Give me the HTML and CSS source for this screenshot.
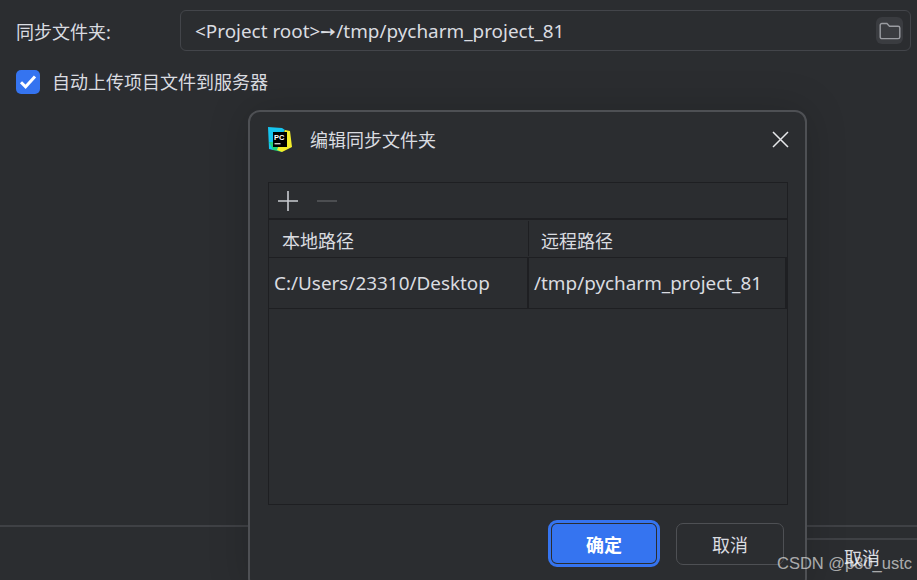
FILE: index.html
```html
<!DOCTYPE html>
<html lang="zh-CN">
<head>
  <meta charset="UTF-8">
  <title>编辑同步文件夹</title>
  <link rel="stylesheet" href="styles.css">
</head>
<body>

<div class="page">
  <!-- settings behind the dialog -->
  <div class="form-row">
    <label class="form-label">同步文件夹:</label>
    <div class="path-input">
      <span class="path-text">&lt;Project root&gt;➙/tmp/pycharm_project_81</span>
      <span class="folder-btn">
        <svg width="22" height="18" viewBox="0 0 22 18" fill="none" stroke="#9a9ca1" stroke-width="1.4">
          <path d="M1.2 3.2c0-1 .8-1.7 1.7-1.7h5l2.6 2.7h8.6c.9 0 1.7.8 1.7 1.7v9c0 1-.8 1.7-1.7 1.7H2.9c-.9 0-1.7-.7-1.7-1.7z"/>
        </svg>
      </span>
    </div>
  </div>

  <div class="check-row">
    <span class="checkbox">
      <svg width="18" height="16" viewBox="0 0 18 16" fill="none" stroke="#fff" stroke-width="3">
        <path d="M2 8.2l4.6 4.6L16 2.6"/>
      </svg>
    </span>
    <span>自动上传项目文件到服务器</span>
  </div>

  <div class="page-footer">
    <div class="page-footer-btn">取消</div>
  </div>
</div>

<!-- dialog -->
<div class="dialog">
  <div class="dialog-title">
    <svg class="app-logo" width="24" height="25" viewBox="0 0 24 25">
      <path d="M0 0l14 1 3 2-9 12-3 8-4-1z" fill="#16c5f0"/>
      <path d="M1 15l4 8 9 2-1-10z" fill="#1fd27f"/>
      <path d="M17 3l5 1 2 16-10 5-5-2z" fill="#f4ee2a"/>
      <rect x="5" y="5" width="14" height="15" fill="#000"/>
      <text x="6" y="12.5" class="logo-text">PC</text>
      <rect x="6.5" y="16" width="6" height="1.4" fill="#ccc"/>
    </svg>
    <span class="dialog-name">编辑同步文件夹</span>
    <svg class="close-icon" width="17" height="17" viewBox="0 0 17 17" stroke="#e6e7ea" stroke-width="1.5">
      <path d="M1 1l15 15M16 1L1 16"/>
    </svg>
  </div>

  <div class="table-box">
    <div class="toolbar">
      <svg width="20" height="20" viewBox="0 0 20 20" stroke="#c9cbd0" stroke-width="1.6"><path d="M0 10h20M10 0v20"/></svg>
      <svg width="20" height="20" viewBox="0 0 20 20" stroke="#55575b" stroke-width="1.6"><path d="M0 10h20"/></svg>
    </div>
    <div class="table-head">
      <div class="head-cell head-first">本地路径</div>
      <div class="head-cell">远程路径</div>
    </div>
    <div class="table-row">
      <div class="row-cell row-first">C:/Users/23310/Desktop</div>
      <div class="row-cell">/tmp/pycharm_project_81</div>
    </div>
  </div>

  <div class="dialog-buttons">
    <div class="btn-ok"><span>确定</span></div>
    <div class="btn-cancel">取消</div>
  </div>
</div>

<div class="watermark">CSDN @p80_ustc</div>

</body>
</html>
```

FILE: styles.css
```css
* {
  margin: 0;
  padding: 0;
  box-sizing: border-box;
}

html, body {
  height: 580px;
  overflow: hidden;
}

body {
  position: relative;
  font-family: "Noto Sans", "Noto Sans CJK SC", sans-serif;
  background: #2b2d30;
  color: #dadce0;
  font-size: 18px;
}

.page {
  height: 580px;
  display: flex;
  flex-direction: column;
  padding-top: 10px;
}

.form-row {
  display: flex;
  align-items: center;
  padding: 0 6px 0 16px;
}

.form-label {
  width: 164px;
}

.path-input {
  flex: 1;
  height: 41px;
  border: 1.5px solid #43454a;
  border-radius: 6px;
  display: flex;
  align-items: center;
  justify-content: space-between;
  padding: 0 7px 0 14px;
  font-size: 18.9px;
}

.folder-btn {
  width: 27px;
  height: 27px;
  border-radius: 6px;
  background: #3a3c40;
  display: flex;
  align-items: center;
  justify-content: center;
}

.check-row {
  display: flex;
  align-items: center;
  gap: 12px;
  margin-top: 19px;
  padding-left: 16px;
  line-height: 24px;
}

.checkbox {
  width: 24px;
  height: 24px;
  border-radius: 5px;
  background: #3574f0;
  display: flex;
  align-items: center;
  justify-content: center;
}

.page-footer {
  margin-top: auto;
  height: 55px;
  border-top: 2px solid #3f4145;
  padding-top: 11px;
}

.page-footer-btn {
  margin-left: 806px;
  height: 42px;
  border-top: 2px solid #3f4145;
  padding: 4px 0 0 38px;
}

.dialog {
  position: absolute;
  left: 248px;
  top: 110px;
  width: 559px;
  height: 480px;
  background: #2b2d30;
  border: 2px solid #4e5054;
  border-radius: 12px;
  padding: 0 17px 0 18px;
  box-shadow: 0 0 40px rgba(0, 0, 0, 0.18);
}

.dialog-title {
  height: 54px;
  margin-bottom: 16px;
  display: flex;
  align-items: center;
}

.app-logo {
  margin-right: 18px;
}

.logo-text {
  font-family: "Liberation Sans", sans-serif;
  font-size: 7.5px;
  font-weight: bold;
  fill: #fff;
}

.dialog-name {
  flex: 1;
}

.close-icon {
  margin-right: -1px;
}

.table-box {
  height: 323px;
  border: 1.5px solid #1e1f22;
}

.toolbar {
  height: 37px;
  display: flex;
  align-items: center;
  gap: 19px;
  padding-left: 9px;
  border-bottom: 2px solid #1e1f22;
}

.table-head {
  height: 38px;
  display: flex;
  border-bottom: 1.5px solid #1e1f22;
}

.head-cell {
  flex: 1;
  padding: 7px 0 0 12px;
}

.head-first {
  flex: 0 0 260px;
  border-right: 1px solid #1e1f22;
  margin: 1px 0;
  padding: 6px 0 0 13px;
}

.table-row {
  height: 51px;
  display: flex;
  align-items: center;
  border-bottom: 1.5px solid #1e1f22;
  font-size: 18.9px;
}

.row-cell {
  flex: 1;
  height: 100%;
  padding: 12px 0 0 5px;
  border-right: 2px solid #1e1f22;
}

.row-first {
  flex: 0 0 260px;
}

.dialog-buttons {
  display: flex;
  justify-content: flex-end;
  align-items: center;
  gap: 16px;
  margin-top: 15px;
  padding-right: 4px;
}

.btn-ok {
  width: 112px;
  height: 47px;
  border: 3px solid #3574f0;
  border-radius: 9px;
  padding: 1px;
  background: #2b2d30;
}

.btn-ok span {
  display: flex;
  align-items: center;
  justify-content: center;
  height: 100%;
  background: #3574f0;
  border-radius: 5px;
  color: #fff;
  font-weight: 700;
}

.btn-cancel {
  width: 108px;
  height: 42px;
  border: 1.5px solid #4e5054;
  border-radius: 7px;
  display: flex;
  align-items: center;
  justify-content: center;
}

.watermark {
  position: absolute;
  left: 777px;
  top: 554px;
  font-family: "Liberation Sans", sans-serif;
  font-size: 16.5px;
  color: rgba(255, 255, 255, 0.62);
}
```
